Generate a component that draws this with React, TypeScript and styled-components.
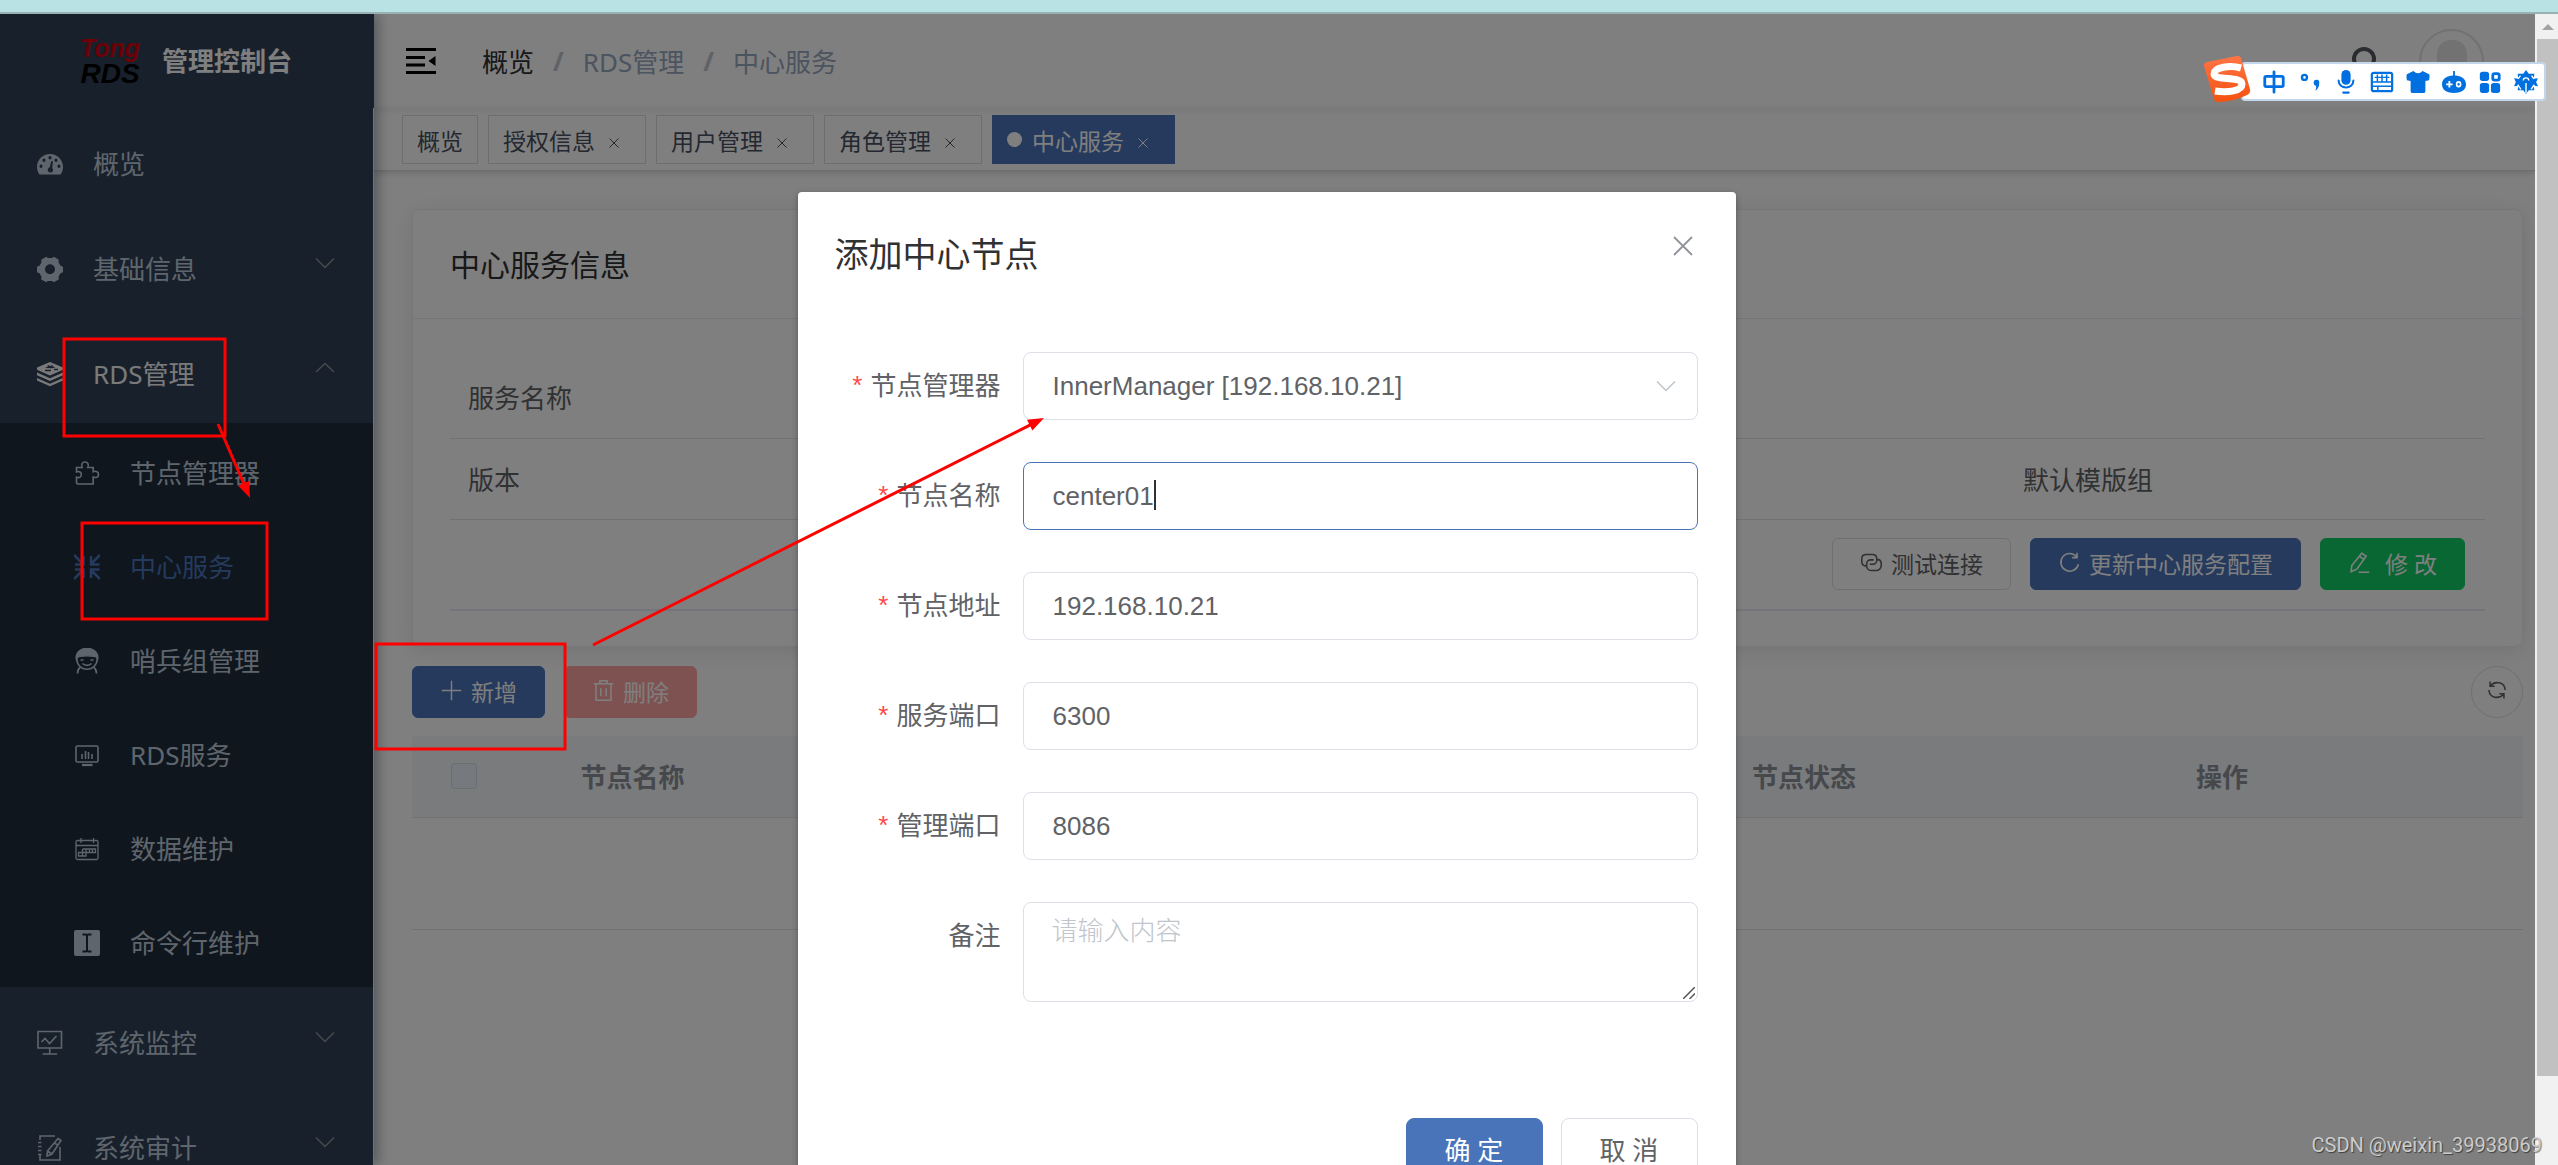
import React, { useState } from "react";
import styled, { createGlobalStyle } from "styled-components";

const cjk = `"Noto Sans", "Noto Sans CJK SC", sans-serif`;
const arial = `"Liberation Sans", "Noto Sans CJK SC", sans-serif`;
const primary = "#4a74ba";

const GlobalStyle = createGlobalStyle`
  * { box-sizing: border-box; }
  html, body { margin: 0; padding: 0; overflow: hidden; }
  button, input, select, textarea { margin: 0; font: inherit; outline: none; }
  button { cursor: pointer; }
  ul { list-style: none; margin: 0; padding: 0; }
  svg { display: block; }
`;

/* ---------- shell ---------- */

const Frame = styled.div`
  position: relative;
  display: flex;
  flex-direction: column;
  height: 100vh;
  overflow: hidden;
  background: #fff;
  color: #303133;
  font-family: ${cjk};
  font-size: 26px;
`;

const TopStrip = styled.div`
  flex: none;
  height: 14px;
  background: #b8e2e4;
  border-bottom: 2px solid #98b2b3;
`;

const Viewport = styled.div`
  flex: 1;
  min-height: 0;
  display: flex;
`;

const Page = styled.div`
  position: relative;
  flex: 1;
  min-width: 0;
  display: flex;
  overflow: hidden;
`;

const ScrollTrack = styled.div`
  flex: none;
  width: 23px;
  display: flex;
  flex-direction: column;
  background: #f1f1f1;
  padding-left: 2px;
`;

const ScrollArrow = styled.div`
  height: 25px;
  display: flex;
  align-items: center;
  justify-content: center;
`;

const ScrollThumb = styled.div`
  flex: 1;
  background: #c1c1c1;
  margin-bottom: 89px;
`;

/* ---------- sidebar ---------- */

const Sidebar = styled.aside`
  position: relative;
  z-index: 2;
  flex: none;
  width: 374px;
  background: #304156;
  box-shadow: 4px 0 12px rgba(0, 21, 41, 0.35);
`;

const Brand = styled.div`
  height: 94px;
  display: flex;
  align-items: center;
  padding-left: 80px;
  gap: 22px;
`;

const BrandLogo = styled.div`
  width: 60px;
  display: flex;
  flex-direction: column;
  align-items: center;
  font-family: ${arial};
  font-weight: 700;
  font-style: italic;
  line-height: 26px;
`;

const LogoTop = styled.span`
  color: #d8000f;
  font-size: 25px;
`;

const LogoBottom = styled.span`
  color: #000;
  font-size: 28px;
`;

const BrandTitle = styled.h1`
  margin: 0;
  padding-bottom: 3px;
  font-size: 26px;
  font-weight: 700;
  color: #fff;
`;

const Menu = styled.ul`
  border-right: 1px solid #e6e6e6;
`;

const MenuLink = styled.button<{ $open?: boolean }>`
  width: 100%;
  height: 105px;
  display: grid;
  grid-template-columns: 26px 1fr 20px;
  column-gap: 30px;
  align-items: center;
  padding: 6px 38px 0 37px;
  border: 0;
  background: transparent;
  text-align: left;
  color: ${(p) => (p.$open ? "#f4f4f5" : "#bfcbd9")};
`;

const MenuText = styled.span`
  padding-bottom: 2px;
`;

const Chevron = styled.span`
  color: #909399;
  padding-bottom: 12px;
`;

const SubMenu = styled.ul`
  background: #1f2d3d;
`;

const SubLink = styled.button<{ $active?: boolean }>`
  width: 100%;
  height: 94px;
  display: grid;
  grid-template-columns: 26px 1fr;
  column-gap: 30px;
  align-items: center;
  padding: 6px 38px 0 74px;
  border: 0;
  background: transparent;
  text-align: left;
  color: ${(p) => (p.$active ? primary : "#bfcbd9")};
`;

/* ---------- main ---------- */

const Main = styled.main`
  flex: 1;
  min-width: 0;
  display: flex;
  flex-direction: column;
`;

const Navbar = styled.header`
  flex: none;
  height: 94px;
  display: flex;
  align-items: center;
  padding: 0 51px 0 32px;
  box-shadow: 0 2px 8px rgba(0, 21, 41, 0.08);
`;

const IconButton = styled.button`
  border: 0;
  padding: 0;
  background: transparent;
  color: #000;
`;

const Breadcrumb = styled.nav`
  flex: 1;
  display: flex;
  align-items: center;
  padding-left: 46px;
`;

const Crumb = styled.a<{ $link?: boolean }>`
  text-decoration: none;
  color: ${(p) => (p.$link ? "#303133" : "#97a8be")};
`;

const Slash = styled.span`
  margin: 0 19px;
  font-weight: 700;
  color: #c0c4cc;
`;

const Tools = styled.div`
  display: flex;
  align-items: center;
  gap: 38px;
`;

const Avatar = styled.div`
  width: 65px;
  height: 65px;
  border: 2px solid #e2e2e4;
  border-radius: 50%;
  display: flex;
  justify-content: center;
  padding-top: 9px;
`;

const TagsBar = styled.div`
  flex: none;
  height: 63px;
  display: flex;
  gap: 10px;
  padding: 7px 28px;
  border-bottom: 1px solid #d8dce5;
  box-shadow: 0 2px 6px rgba(0, 0, 0, 0.16);
`;

const Tag = styled.button<{ $active?: boolean }>`
  height: 49px;
  display: flex;
  align-items: center;
  gap: 14px;
  padding: 0 14px;
  border: 1px solid ${(p) => (p.$active ? primary : "#d8dce5")};
  background: ${(p) => (p.$active ? primary : "#fff")};
  color: ${(p) => (p.$active ? "#fff" : "#495060")};
  font-size: 23px;
`;

const TagText = styled.span`
  display: flex;
  align-items: center;
  gap: 10px;
`;

const Dot = styled.span`
  width: 15px;
  height: 15px;
  border-radius: 50%;
  background: #fff;
`;

const TagClose = styled.span`
  padding: 6px 12px 0 0;
`;

const Content = styled.section`
  flex: 1;
  min-height: 0;
  padding: 38px 12px 0 38px;
`;

const Card = styled.div`
  border: 1px solid #ebeef5;
  border-radius: 8px;
  background: #fff;
  box-shadow: 0 4px 22px rgba(0, 0, 0, 0.1);
`;

const CardHeader = styled.h2`
  margin: 0;
  padding: 3px 37px 0;
  height: 109px;
  line-height: 104px;
  font-size: 30px;
  font-weight: 400;
  border-bottom: 1px solid #e6ebf5;
`;

const CardBody = styled.div`
  padding: 38px 37px 35px;
`;

const InfoTable = styled.table`
  width: 100%;
  table-layout: fixed;
  border-collapse: collapse;
  color: #606266;
`;

const InfoCell = styled.td<{ $w?: number }>`
  height: 81px;
  width: ${(p) => (p.$w ? `${p.$w}px` : "auto")};
  padding: 0 18px;
  border-bottom: 1px solid #dfe6ec;
`;

const ActionCell = styled.td`
  height: 91px;
  padding: 0 20px;
  border-bottom: 2px solid #e6ebf5;
`;

const ButtonRow = styled.div<{ $end?: boolean }>`
  display: flex;
  gap: 19px;
  justify-content: ${(p) => (p.$end ? "flex-end" : "flex-start")};
`;

type Tone = "plain" | "primary" | "success" | "danger";
const toneFill: Record<Tone, string> = {
  plain: "#fff",
  primary,
  success: "#13ce66",
  danger: "#ffa4a4",
};

const Button = styled.button<{ $tone: Tone }>`
  height: 52px;
  display: flex;
  align-items: center;
  gap: 8px;
  padding: 0 27px 3px;
  border: 1px solid ${(p) => (p.$tone === "plain" ? "#dcdfe6" : toneFill[p.$tone])};
  border-radius: 6px;
  background: ${(p) => toneFill[p.$tone]};
  color: ${(p) => (p.$tone === "plain" ? "#606266" : "#fff")};
  font-size: 23px;
  white-space: pre;
`;

const Toolbar = styled.div`
  display: flex;
  justify-content: space-between;
  padding: 19px 0 18px;
`;

const RoundButton = styled.button`
  width: 52px;
  height: 52px;
  display: flex;
  align-items: center;
  justify-content: center;
  padding: 0 0 4px;
  border: 1px solid #dcdfe6;
  border-radius: 50%;
  background: #fff;
  color: #606266;
`;

const DataTable = styled.table`
  width: 100%;
  table-layout: fixed;
  border-collapse: collapse;
`;

const HeadCell = styled.th<{ $w?: number }>`
  height: 81px;
  width: ${(p) => (p.$w ? `${p.$w}px` : "auto")};
  padding: 0;
  background: #f3f6f9;
  border-bottom: 1px solid #dfe6ec;
  color: #8c9098;
  font-weight: 700;
  text-align: center;
`;

const EmptyCell = styled.td`
  height: 112px;
  border-bottom: 1px solid #dfe6ec;
`;

const Check = styled.input`
  appearance: none;
  display: block;
  width: 26px;
  height: 26px;
  margin: 0 auto;
  border: 1px solid #d5dae4;
  border-radius: 4px;
  background: #edf2fc;
`;

/* ---------- dialog ---------- */

const Mask = styled.div`
  position: absolute;
  inset: 0;
  z-index: 5;
  display: flex;
  justify-content: center;
  align-items: flex-start;
  padding: 178px 2px 0 0;
  background: rgba(0, 0, 0, 0.5);
`;

const Dialog = styled.form`
  width: 938px;
  background: #fff;
  border-radius: 4px;
  box-shadow: 0 2px 6px rgba(0, 0, 0, 0.3);
`;

const DialogHead = styled.div`
  display: flex;
  justify-content: space-between;
  align-items: flex-start;
  padding: 37px 43px 0 37px;
`;

const DialogTitle = styled.h3`
  margin: 0;
  font-size: 34px;
  line-height: 50px;
  font-weight: 400;
`;

const CloseButton = styled(IconButton)`
  padding: 7px 0;
  color: #909399;
`;

const DialogBody = styled.div`
  display: grid;
  row-gap: 42px;
  padding: 73px 38px 0;
`;

const Field = styled.div`
  display: grid;
  grid-template-columns: 187px 1fr;
`;

const FieldLabel = styled.label`
  display: flex;
  justify-content: flex-end;
  gap: 8px;
  padding-right: 22px;
  line-height: 66px;
  color: #606266;
`;

const Required = styled.span`
  color: #ff4949;
  font-family: ${arial};
`;

const Control = styled.div`
  position: relative;
`;

const boxed = `
  display: block;
  width: 100%;
  border: 1px solid #dcdfe6;
  border-radius: 8px;
  background: #fff;
  color: #606266;
  font-size: 26px;
`;

const TextInput = styled.input<{ $focus?: boolean }>`
  ${boxed}
  height: 68px;
  padding: 0 29px;
  font-family: ${arial};
  border-color: ${(p) => (p.$focus ? primary : "#dcdfe6")};
`;

const Select = styled.select`
  ${boxed}
  appearance: none;
  height: 68px;
  padding: 0 60px 0 29px;
  font-family: ${arial};
`;

const SelectArrow = styled.span`
  position: absolute;
  right: 22px;
  top: 28px;
  color: #c0c4cc;
  pointer-events: none;
`;

const Caret = styled.span`
  position: absolute;
  left: 131px;
  top: 18px;
  width: 2px;
  height: 30px;
  background: #303133;
`;

const TextArea = styled.textarea`
  ${boxed}
  height: 100px;
  padding: 9px 28px;
  line-height: 39px;
  resize: none;
  font-family: ${arial};
  &::placeholder {
    color: #c0c4cc;
    font-weight: 300;
    opacity: 1;
  }
`;

const ResizeGrip = styled.span`
  position: absolute;
  right: 3px;
  bottom: 3px;
  color: #555;
`;

const DialogFoot = styled.div`
  display: flex;
  justify-content: flex-end;
  gap: 18px;
  padding: 116px 38px 38px;
`;

const FootButton = styled.button<{ $tone: Tone }>`
  width: 137px;
  height: 68px;
  padding: 0 0 5px;
  border: 1px solid ${(p) => (p.$tone === "plain" ? "#dcdfe6" : toneFill[p.$tone])};
  border-radius: 8px;
  background: ${(p) => toneFill[p.$tone]};
  color: ${(p) => (p.$tone === "plain" ? "#606266" : "#fff")};
  font-size: 26px;
  line-height: 36px;
`;

/* ---------- floating layers ---------- */

const Marks = styled.svg`
  position: absolute;
  inset: 0;
  z-index: 8;
  width: 100%;
  height: 100%;
  pointer-events: none;
`;

const ImeBar = styled.div`
  position: absolute;
  z-index: 9;
  top: 62px;
  right: 12px;
  height: 39px;
  display: flex;
  align-items: center;
  gap: 12px;
  padding: 0 6px 0 19px;
  border: 2px solid #c3d6ec;
  border-radius: 4px;
  background: #fff;
  color: #0070e0;
`;

const ImeLogo = styled.span`
  position: absolute;
  left: -40px;
  top: -9px;
`;

const Watermark = styled.div`
  position: absolute;
  z-index: 9;
  right: 16px;
  bottom: 8px;
  font-family: Roboto, sans-serif;
  font-size: 20px;
  line-height: 24px;
  color: #ccc;
  text-shadow: 1px 1px 1px rgba(0, 0, 0, 0.5);
`;

/* ---------- icons ---------- */

const Svg = ({ size = 26, children, fill = "none", sw = 1.6 }: {
  size?: number; children: React.ReactNode; fill?: string; sw?: number;
}) => (
  <svg width={size} height={size} viewBox="0 0 26 26" fill={fill} stroke={fill === "none" ? "currentColor" : "none"} strokeWidth={sw} aria-hidden="true">
    {children}
  </svg>
);

const DashboardIcon = () => (
  <Svg fill="currentColor">
    <path fillRule="evenodd" d="M2.5 23.5C.8 21 0 18.500 0 16 0 8.800 5.800 3 13 3s13 5.800 13 13c0 2.500-.8 5-2.500 7.500zM13 5a1.600 1.800 0 100 3.600A1.600 1.800 0 0013 5zM7 7.500a1.600 1.700 0 100 3.400 1.600 1.700 0 000-3.400zm12 0a1.600 1.700 0 100 3.400 1.600 1.700 0 000-3.400zM4 13.500a1.600 1.700 0 100 3.400 1.600 1.700 0 000-3.400zm18 0a1.600 1.700 0 100 3.400 1.600 1.700 0 000-3.400zM14.300 10l-1.600 6.300a2.700 2.700 0 102.500.6l.7-6.600z" />
  </Svg>
);
const GearIcon = () => (
  <Svg fill="currentColor">
    <path fillRule="evenodd" d="M9.200.8L10.800 2h4.400L16.800.8l5 2.900-.3 2.600 2 3.500 2.500 1v5.400l-2.500 1.100-2 3.400.3 2.700-5 2.800-1.600-1.200h-4.400l-1.600 1.200-5-2.800.3-2.700-2-3.400L0 16.200v-5.400l2.500-1 2-3.500-.3-2.600zM13 8.200a5 5 0 100 10 5 5 0 000-10z" />
  </Svg>
);
const StackIcon = () => (
  <Svg fill="currentColor">
    <path d="M13 1l13 5.500v2.300L13 14.500 0 8.800V6.500zM0 11.500l13 5.700 13-5.700v2.800L13 20 0 14.300zM0 17l13 5.700L26 17v2.600l-13 5.600L0 19.600z" />
    <path d="M8 7l3-1.500L10.500 4l3 1 2.500-1.200-.5 1.700 3 .8-3 .9z" fill="#304156" />
    <path d="M8 9.500h6M17 8.500h4" stroke="#304156" strokeWidth="1.500" />
  </Svg>
);
const PuzzleIcon = () => (
  <Svg>
    <path d="M2.500 7.500h5.700c-1.500-3 .2-5.500 2.800-5.500s4.300 2.500 2.800 5.500h5.400v4.300c3-1.300 5.300.2 5.300 2.600s-2.300 4-5.300 2.600V24H3.500l-1-1v-5.800c3 1.200 4.800-.4 4.800-2.600s-1.800-3.900-4.800-2.700z" />
  </Svg>
);
const CompressIcon = () => (
  <Svg sw={2.500}>
    <path d="M0 1l8 8M9.500 2v8.500H1M26 1l-8 8M17 2v8.500h8.500M0 25l8-8M9.500 24v-8.500H1M26 25l-8-8M17 24v-8.500h8.500" />
  </Svg>
);
const FaceIcon = () => (
  <Svg>
    <circle cx="13" cy="11" r="10.200" />
    <path d="M2.300 10C2 4 7 .5 13 .5S24 4 23.700 10C21 7 5 7 2.300 10z" fill="currentColor" />
    <path d="M8.500 15.500c2.500 2.500 6.500 2.500 9 0M6.500 12h3M16.500 12h3M6 19.500c-2 1.500-2.500 4-2.500 6M20 19.500c2 1.500 2.500 4 2.500 6" />
  </Svg>
);
const ChartIcon = () => (
  <Svg>
    <rect x="2" y="4" width="22" height="16" rx="1.500" />
    <path d="M8 17v-5M11.500 17V9M14.500 17v-7M18 17v-5" />
    <path d="M8 23h10.500" strokeWidth="2.200" />
  </Svg>
);
const CalendarIcon = () => (
  <Svg sw={1.300}>
    <rect x="2" y="4.500" width="22" height="19" rx="1.500" />
    <path d="M7 2v5M19.500 2v5M2 9.500h22M8.500 13H21.500v3.500H4.500V20H12V13M15.500 13v3.500M18.500 13v3.500M8.500 13v7M4.500 16.500v3.500" />
  </Svg>
);
const CursorIcon = () => (
  <Svg>
    <rect x="0" y="0" width="26" height="26" rx="2" fill="currentColor" stroke="none" />
    <path d="M8.500 4.500h3q1.500 0 1.500 1.500v14q0 1.500-1.500 1.500h-3M17.500 4.500h-3Q13 4.500 13 6v14q0 1.500 1.500 1.500h3" stroke="#1f2d3d" strokeWidth="2" />
  </Svg>
);
const MonitorIcon = () => (
  <Svg>
    <path d="M1 1.500h23.500V18H1zM12.700 18v5.500M5.500 24h14.500M4.500 12L8 8.500l4.500 5 7-7.500" />
  </Svg>
);
const NotebookIcon = () => (
  <Svg>
    <path d="M3 5V1h15M3 20v5h20V12M1 7.500h3.500M1 11.500h3.500M1 15.500h3.500M1 19.500h3.500M21 3.500l3 2-9 13.500-5 2 .5-5zM17.500 8l3.500 2.200M10.500 16l4.500 3" />
  </Svg>
);
const ChevronIcon = ({ up }: { up?: boolean }) => (
  <svg width="20" height="12" viewBox="0 0 20 12" fill="none" stroke="currentColor" strokeWidth="1.500" aria-hidden="true">
    <path d={up ? "M1 10L10 1.500 19 10" : "M1 1.500L10 10.500 19 1.500"} />
  </svg>
);
const CrossIcon = ({ size, sw }: { size: number; sw: number }) => (
  <svg width={size} height={size} viewBox="0 0 20 20" stroke="currentColor" strokeWidth={sw} aria-hidden="true">
    <path d="M1 1l18 18M19 1L1 19" />
  </svg>
);
const FoldIcon = () => (
  <svg width="30" height="28" viewBox="0 0 30 28" aria-hidden="true">
    <path d="M0 1h30v3H0zM0 9h19v3H0zM0 16.500h19v3H0zM0 24h30v3H0zM29.500 9v10L22.500 14z" fill="currentColor" />
  </svg>
);
const LinkIcon = () => (
  <Svg size={23} sw={1.800}>
    <path d="M7 17C4 17 2 15 2 12V9c0-3 2-5 5-5h7c3 0 5 2 5 5v1.500c0 2.500-2 4.500-4.500 4.500H11M19 9.500c3 0 5 2 5 5v1.500c0 3-2 6-5 6h-6.500c-3 0-5-2.500-5-5V14.500c0-2.500 2-4.500 4.500-4.500h3.500" />
  </Svg>
);
const ReloadIcon = () => (
  <Svg size={23} sw={1.800}>
    <path d="M21 6.500A10 10 0 1023 15M21.500 2v5.500H16" />
  </Svg>
);
const EditIcon = () => (
  <Svg size={23} sw={1.800}>
    <path d="M15.500 2.500l5 3.500L10 20.500l-6.500 3 .8-7zM13 6l5 3.500M12 24h12" />
  </Svg>
);
const PlusIcon = () => (
  <Svg size={23} sw={1.600}><path d="M13 2v22M2 13h22" /></Svg>
);
const TrashIcon = () => (
  <Svg size={23} sw={1.700}><path d="M2 5.500h22M9 5V2h8v3M4.500 6v18h17V6M10 10.500v9M16 10.500v9" /></Svg>
);
const RefreshIcon = () => (
  <Svg size={20} sw={2}>
    <path d="M4 2v6h6M4.500 7.500C10 1 23 2 23.500 13M22 24v-6h-6M21.500 18.500C16 25 3 24 2.500 13" />
  </Svg>
);
const SearchIcon = () => (
  <svg width="32" height="32" viewBox="0 0 32 32" fill="none" stroke="#55585e" strokeWidth="4" aria-hidden="true">
    <circle cx="15" cy="14" r="10" /><path d="M22 22l8 8" />
  </svg>
);

const imeIcons = [
  <Svg size={24} sw={3}><path d="M3 8.500Q3 7 4.500 7h17Q23 7 23 8.500v8q0 1.500-1.500 1.500h-17Q3 18 3 16.500zM13 2v22" strokeLinecap="round" /></Svg>,
  <Svg size={24} sw={2.600}><circle cx="7" cy="8" r="2.700" /><path d="M17 13a3 3 0 116 1c0 4-1.500 7-4.500 8.500 1-2 1.500-3.500 1-5.500A3 3 0 0117 14z" fill="currentColor" stroke="none" /></Svg>,
  <Svg size={24} sw={2.200}><rect x="8" y="0" width="10" height="16" rx="5" fill="currentColor" stroke="none" /><path d="M5 11.500c0 10 16 10 16 0M10 24.500h6" strokeLinecap="round" /></Svg>,
  <Svg size={24} sw={2.400}><rect x="2" y="3" width="22" height="20" rx="2" /><path d="M5 8h16M3 13h20M3 17.500h20M8 5v8M13 5v8M18 5v8M8.500 17v5" strokeWidth="1.600" /></Svg>,
  <Svg size={24} fill="currentColor"><path d="M8 1q5 5 10 0l7 3.500q1 1 0 6.500l-4 1v11q0 2-2 2H7q-2 0-2-2V12l-4-1Q0 5.500 1 4.500z" /></Svg>,
  <Svg size={24} fill="currentColor"><path fillRule="evenodd" d="M12 1h2v5c7 0 12 4 12 9.500S22 25 13 25 0 21 0 15.500 5 6 12 6zM7 12v2.500H4.500v2H7V19h2v-2.500h2.500v-2H9V12zm11 0a3 3.500 0 100 7 3 3.500 0 000-7zm0 2a1.300 1.500 0 110 3 1.300 1.500 0 010-3z" /></Svg>,
  <Svg size={24} sw={3}><rect x="2" y="2" width="10" height="10" rx="3" fill="currentColor" stroke="none" /><rect x="2" y="14" width="10" height="11" rx="3" fill="currentColor" stroke="none" /><rect x="14" y="14" width="10" height="11" rx="3" fill="currentColor" stroke="none" /><rect x="16" y="4" width="7" height="7" rx="2" /></Svg>,
  <Svg size={24} fill="currentColor"><path d="M13 0l3 4h6l-.5 5.500L26 9l-2 4 2 4.500-4.500-.5.5 5h-6l-3 4-3-4H4l.5-5L0 17.500 2 13 0 9l4.500.5L4 4h6z" /><path d="M13 14v11M10 11.500a3 3 0 016 0M4.500 9.500L7 6M21.500 9.500L19 6M4 16l3.500 5M22 16l-3.500 5" stroke="#fff" strokeWidth="1.500" fill="none" /></Svg>,
];

const SogouLogo = () => (
  <svg width="48" height="48" viewBox="0 0 48 48" aria-hidden="true">
    <defs>
      <linearGradient id="sogou" x1="0" y1="0" x2="0" y2="1">
        <stop offset="0" stopColor="#ff7545" /><stop offset="1" stopColor="#f4510f" />
      </linearGradient>
    </defs>
    <path d="M4 7L34 1q3-.5 4 2l9 31q1 4-3 6-14 7-29 7-3 0-4-3L1 11q-.5-3 3-4z" fill="url(#sogou)" />
    <path d="M38 13C27 10 11 12 11 19c0 7 28 2 28 10 0 7-14 9-27 7" fill="none" stroke="#fff" strokeWidth="7" />
  </svg>
);

/* ---------- data ---------- */

const subItems = [
  { name: "节点管理器", icon: <PuzzleIcon /> },
  { name: "中心服务", icon: <CompressIcon />, active: true },
  { name: "哨兵组管理", icon: <FaceIcon /> },
  { name: "RDS服务", icon: <ChartIcon /> },
  { name: "数据维护", icon: <CalendarIcon /> },
  { name: "命令行维护", icon: <CursorIcon /> },
];

const menu = [
  { name: "概览", icon: <DashboardIcon /> },
  { name: "基础信息", icon: <GearIcon />, group: true },
  { name: "RDS管理", icon: <StackIcon />, group: true, open: true },
  { name: "系统监控", icon: <MonitorIcon />, group: true },
  { name: "系统审计", icon: <NotebookIcon />, group: true },
];

const tags = [
  { name: "概览", fixed: true },
  { name: "授权信息" },
  { name: "用户管理" },
  { name: "角色管理" },
  { name: "中心服务", active: true },
];

const fields = [
  { id: "nodeName", label: "节点名称", value: "center01", focus: true },
  { id: "nodeAddress", label: "节点地址", value: "192.168.10.21" },
  { id: "servicePort", label: "服务端口", value: "6300" },
  { id: "managePort", label: "管理端口", value: "8086" },
];

const Arrow = ({ x1, y1, x2, y2 }: { x1: number; y1: number; x2: number; y2: number }) => {
  const len = Math.hypot(x2 - x1, y2 - y1);
  const angle = (Math.atan2(y2 - y1, x2 - x1) * 180) / Math.PI;
  return (
    <g transform={`translate(${x1} ${y1}) rotate(${angle})`}>
      <path d={`M0 0H${len - 12}`} stroke="#f00" strokeWidth="3" />
      <path d={`M${len} 0l-16 -6v12z`} fill="#f00" />
    </g>
  );
};

const NodeDialog = () => {
  const [values, setValues] = useState<Record<string, string>>(
    Object.fromEntries(fields.map((f) => [f.id, f.value]))
  );
  return (
    <Dialog aria-label="添加中心节点" onSubmit={(e) => e.preventDefault()}>
      <DialogHead>
        <DialogTitle>添加中心节点</DialogTitle>
        <CloseButton type="button" aria-label="关闭"><CrossIcon size={20} sw={1.800} /></CloseButton>
      </DialogHead>
      <DialogBody>
        <Field>
          <FieldLabel htmlFor="manager"><Required>*</Required>节点管理器</FieldLabel>
          <Control>
            <Select id="manager"><option>InnerManager [192.168.10.21]</option></Select>
            <SelectArrow><ChevronIcon /></SelectArrow>
          </Control>
        </Field>
        {fields.map((f) => (
          <Field key={f.id}>
            <FieldLabel htmlFor={f.id}><Required>*</Required>{f.label}</FieldLabel>
            <Control>
              <TextInput
                id={f.id}
                $focus={f.focus}
                value={values[f.id]}
                onChange={(e) => setValues({ ...values, [f.id]: e.target.value })}
              />
              {f.focus && <Caret />}
            </Control>
          </Field>
        ))}
        <Field>
          <FieldLabel htmlFor="remark">备注</FieldLabel>
          <Control>
            <TextArea id="remark" placeholder="请输入内容" />
            <ResizeGrip>
              <svg width="12" height="12" viewBox="0 0 12 12" stroke="currentColor" strokeWidth="1.500" aria-hidden="true">
                <path d="M0 12L12 0M6.500 12L12 6.500" />
              </svg>
            </ResizeGrip>
          </Control>
        </Field>
      </DialogBody>
      <DialogFoot>
        <FootButton type="submit" $tone="primary">确 定</FootButton>
        <FootButton type="button" $tone="plain">取 消</FootButton>
      </DialogFoot>
    </Dialog>
  );
};

export default function App() {
  return (
    <Frame>
      <GlobalStyle />
      <TopStrip />
      <Viewport>
        <Page>
          <Sidebar>
            <Brand>
              <BrandLogo>
                <LogoTop>Tong</LogoTop>
                <LogoBottom>RDS</LogoBottom>
              </BrandLogo>
              <BrandTitle>管理控制台</BrandTitle>
            </Brand>
            <Menu>
              {menu.map((m) => (
                <li key={m.name}>
                  <MenuLink type="button" $open={m.open}>
                    {m.icon}
                    <MenuText>{m.name}</MenuText>
                    {m.group && <Chevron><ChevronIcon up={m.open} /></Chevron>}
                  </MenuLink>
                  {m.open && (
                    <SubMenu>
                      {subItems.map((s) => (
                        <li key={s.name}>
                          <SubLink type="button" $active={s.active}>
                            {s.icon}
                            <MenuText>{s.name}</MenuText>
                          </SubLink>
                        </li>
                      ))}
                    </SubMenu>
                  )}
                </li>
              ))}
            </Menu>
          </Sidebar>

          <Main>
            <Navbar>
              <IconButton type="button" aria-label="折叠菜单"><FoldIcon /></IconButton>
              <Breadcrumb>
                <Crumb href="#" $link>概览</Crumb><Slash>/</Slash>
                <Crumb>RDS管理</Crumb><Slash>/</Slash>
                <Crumb>中心服务</Crumb>
              </Breadcrumb>
              <Tools>
                <IconButton type="button" aria-label="搜索"><SearchIcon /></IconButton>
                <Avatar>
                  <svg width="40" height="44" viewBox="0 0 40 44" fill="#e4e4e6" aria-hidden="true">
                    <rect x="5" y="0" width="30" height="34" rx="14" /><path d="M0 44q4-12 20-12t20 12z" />
                  </svg>
                </Avatar>
              </Tools>
            </Navbar>
            <TagsBar>
              {tags.map((t) => (
                <Tag key={t.name} type="button" $active={t.active}>
                  <TagText>{t.active && <Dot />}{t.name}</TagText>
                  {!t.fixed && <TagClose><CrossIcon size={10} sw={2} /></TagClose>}
                </Tag>
              ))}
            </TagsBar>
            <Content>
              <Card>
                <CardHeader>中心服务信息</CardHeader>
                <CardBody>
                  <InfoTable>
                    <tbody>
                      <tr><InfoCell>服务名称</InfoCell><InfoCell $w={480} /></tr>
                      <tr><InfoCell>版本</InfoCell><InfoCell $w={480}>默认模版组</InfoCell></tr>
                      <tr>
                        <ActionCell colSpan={2}>
                          <ButtonRow $end>
                            <Button type="button" $tone="plain"><LinkIcon />测试连接</Button>
                            <Button type="button" $tone="primary"><ReloadIcon />更新中心服务配置</Button>
                            <Button type="button" $tone="success"><EditIcon />{" 修 改"}</Button>
                          </ButtonRow>
                        </ActionCell>
                      </tr>
                    </tbody>
                  </InfoTable>
                </CardBody>
              </Card>
              <Toolbar>
                <ButtonRow>
                  <Button type="button" $tone="primary"><PlusIcon />新增</Button>
                  <Button type="button" $tone="danger"><TrashIcon />删除</Button>
                </ButtonRow>
                <RoundButton type="button" aria-label="刷新"><RefreshIcon /></RoundButton>
              </Toolbar>
              <DataTable>
                <thead>
                  <tr>
                    <HeadCell $w={103}><Check type="checkbox" aria-label="全选" /></HeadCell>
                    <HeadCell $w={235}>节点名称</HeadCell>
                    <HeadCell />
                    <HeadCell $w={234}>节点状态</HeadCell>
                    <HeadCell $w={602}>操作</HeadCell>
                  </tr>
                </thead>
                <tbody><tr><EmptyCell colSpan={5} /></tr></tbody>
              </DataTable>
            </Content>
          </Main>

          <Mask><NodeDialog /></Mask>
        </Page>
        <ScrollTrack>
          <ScrollArrow>
            <svg width="12" height="6" viewBox="0 0 12 6" aria-hidden="true"><path d="M0 6L6 0l6 6z" fill="#a3a3a3" /></svg>
          </ScrollArrow>
          <ScrollThumb />
        </ScrollTrack>
      </Viewport>

      <Marks fill="none" aria-hidden="true">
        <g stroke="#f00" strokeWidth="3">
          <rect x="64" y="339" width="161" height="97" />
          <rect x="82" y="523" width="185" height="96" />
          <rect x="376" y="644" width="189" height="105" />
        </g>
        <Arrow x1={218} y1={424} x2={250} y2={498} />
        <Arrow x1={593} y1={645} x2={1044} y2={418} />
      </Marks>

      <ImeBar>
        <ImeLogo><SogouLogo /></ImeLogo>
        {imeIcons.map((icon, i) => <span key={i}>{icon}</span>)}
      </ImeBar>
      <Watermark>CSDN @weixin_39938069</Watermark>
    </Frame>
  );
}
